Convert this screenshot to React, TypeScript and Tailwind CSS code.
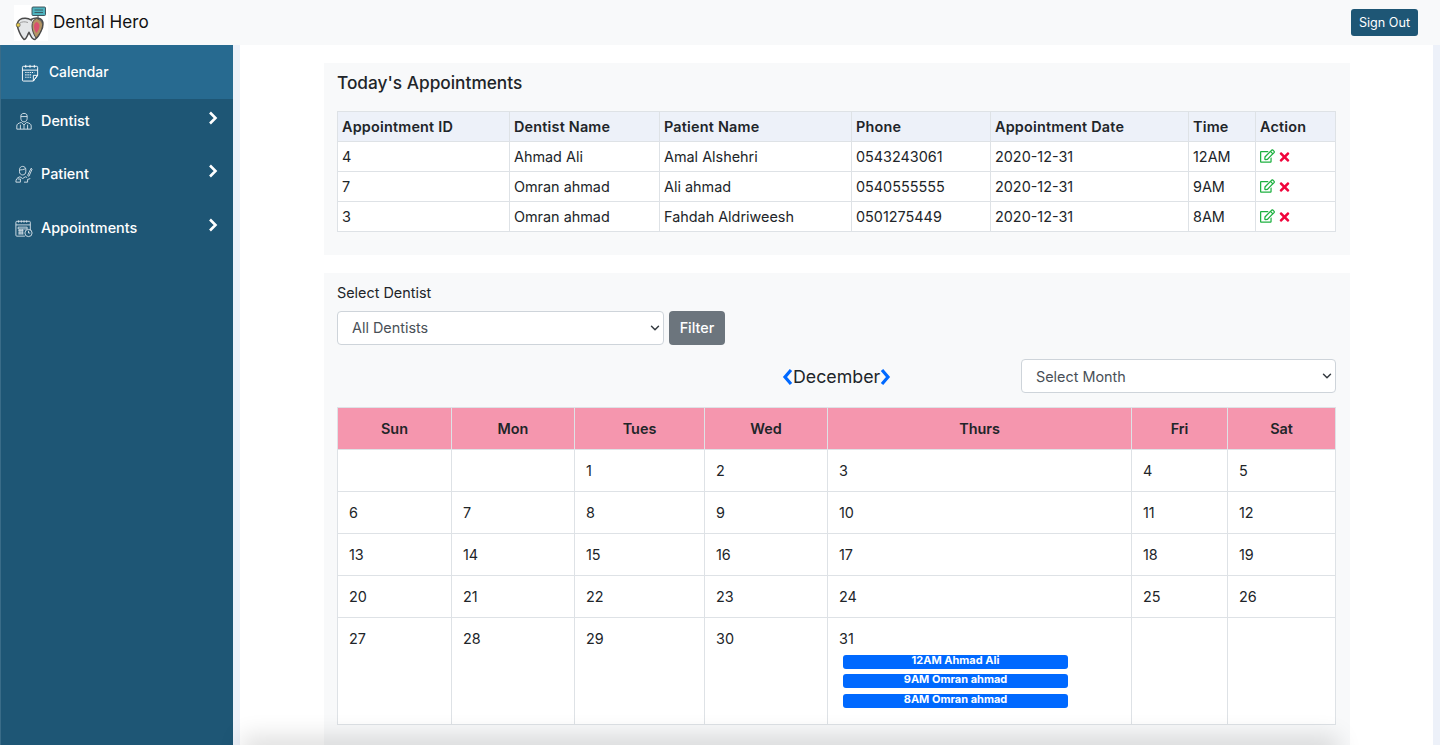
import { ChevronDown } from "lucide-react"
import { FaRegEdit, FaTimes } from "react-icons/fa"

const appointments = [
  { id: "4", dentist: "Ahmad Ali", patient: "Amal Alshehri", phone: "0543243061", date: "2020-12-31", time: "12AM" },
  { id: "7", dentist: "Omran ahmad", patient: "Ali ahmad", phone: "0540555555", date: "2020-12-31", time: "9AM" },
  { id: "3", dentist: "Omran ahmad", patient: "Fahdah Aldriweesh", phone: "0501275449", date: "2020-12-31", time: "8AM" },
]

const days = ["Sun", "Mon", "Tues", "Wed", "Thurs", "Fri", "Sat"]

const weeks = [
  ["", "", "1", "2", "3", "4", "5"],
  ["6", "7", "8", "9", "10", "11", "12"],
  ["13", "14", "15", "16", "17", "18", "19"],
  ["20", "21", "22", "23", "24", "25", "26"],
  ["27", "28", "29", "30", "31", "", ""],
]

const events = ["12AM Ahmad Ali", "9AM Omran ahmad", "8AM Omran ahmad"]

function Logo() {
  return (
    <svg viewBox="0 0 34 36" className="w-[34px] h-[36px]">
      <rect width="34" height="36" fill="#ffffff" />
      <path d="M24 10v4" stroke="#555" strokeWidth="1" />
      <rect x="18" y="2" width="13.500" height="8.500" rx="1" fill="#4fb3bf" stroke="#37474f" strokeWidth="0.9" />
      <path d="M20.500 5h8.500M20.500 7.500h8.500" stroke="#37474f" strokeWidth="0.8" />
      <path d="M17 15c-3-2-8-2.500-11-.5-3 2-3 6-2 9 1 3 3 8 6 11 2.500 0 3-4 5-7 2 3 2.500 7 6 7 3-2 6-8 7.500-12 1-4 .5-7-2-8.500-3-1.500-6.500-1-9.500.5z" fill="#e4e6e8" stroke="#4a4a4a" strokeWidth="1.500" />
      <path d="M22.500 13.500c-3 1-4.500 4-4.500 7.500 0 4 1.500 8 4 12 3-3 6-8 6.500-12 .5-3.500-2-6.500-6-7.500z" fill="#b39463" stroke="#4a4a4a" strokeWidth="1" />
      <path d="M22.500 17c-1.800 1-2.500 2.500-2.500 4.500 0 2.500 1 4.500 2.300 6.500 1.700-2 3.200-4.500 3.200-7 0-2-1.200-3.500-3-4z" fill="#d9506f" />
      <path d="M6 18c2-1.500 5-1.500 8-.5" fill="none" stroke="#9a9a9a" strokeWidth="1" />
      <circle cx="4.200" cy="20" r="2" fill="#e3c84b" stroke="#4a4a4a" strokeWidth="0.6" />
    </svg>
  )
}

function CalendarIcon() {
  return (
    <svg viewBox="0 0 20 20" fill="none" stroke="#ffffff" strokeWidth="1" className="w-[19px] h-[19px]">
      <path d="M17.500 13V4.500a1 1 0 0 0-1-1h-14a1 1 0 0 0-1 1V18a1 1 0 0 0 1 1H13z" />
      <path d="M1.500 7.500h16M5 2v3M9.500 2v3M14 2v3M13 19l4.500-6H13z" />
      <path d="M4.500 10h9.500M4.500 12.500h7M4.500 15h7" strokeDasharray="1.300 1" strokeWidth="1.300" />
    </svg>
  )
}

function DentistIcon() {
  return (
    <svg viewBox="0 0 20 20" fill="none" stroke="#dbe5ec" strokeWidth="1" className="w-[18px] h-[19px]">
      <path d="M6.500 4c0-2 1.500-3 3.500-3s3.500 1 3.500 3v2.500c0 2-1.500 4-3.500 4s-3.500-2-3.500-4z" />
      <path d="M6.500 4.500h7" />
      <path d="M2 18.500v-3.500c0-2 1.500-3 5-4l3 3 3-3c3.500 1 5 2 5 4v3.500z" />
      <path d="M6 18.500v-5M14 18.500v-5M10 14v4.500" />
    </svg>
  )
}

function PatientIcon() {
  return (
    <svg viewBox="0 0 20 20" fill="none" stroke="#dbe5ec" strokeWidth="1" className="w-[19px] h-[19px]">
      <path d="M5 4.500c0-2 1.500-3.500 3.500-3.500 2 0 3.500 1.500 3.500 3.500v2.500c0 2-1.500 3.500-3.500 3.500S5 9 5 7z" />
      <path d="M5 5c2 0 5-.5 7-1.500" />
      <path d="M1 18.500c0-3 1-5 4.500-6l3 2 3-2 2 .8M3 15h3v3.500H1M10 18.500h4v-3l3-1" />
      <path d="M14 11l4-8 1 1-3.500 8z" />
    </svg>
  )
}

function AppointmentsIcon() {
  return (
    <svg viewBox="0 0 20 20" fill="none" stroke="#dbe5ec" strokeWidth="1" className="w-[19px] h-[19px]">
      <path d="M11 18.500H2a1 1 0 0 1-1-1V3a1 1 0 0 1 1-1h14a1 1 0 0 1 1 1v9" />
      <path d="M1 6h16M4 1v2.500M7 1v2.500M10 1v2.500M13 1v2.500" />
      <path d="M3.500 8.500h10v2h-10zM3.500 12h6M3.500 14h6M3.500 16h6M5.500 10.500v6M8 10.500v6" />
      <circle cx="15" cy="15" r="4" />
      <path d="M15 12.500V15h2" />
    </svg>
  )
}

function NavChevron() {
  return (
    <svg viewBox="0 0 10 14" fill="none" stroke="#ffffff" strokeWidth="2.600" className="ml-auto w-[10px] h-[14px] shrink-0">
      <path d="M2 1.500L7.500 7 2 12.500" />
    </svg>
  )
}

function MonthArrow({ d }: { d: string }) {
  return (
    <svg viewBox="0 0 11 18" fill="none" stroke="#0069ff" strokeWidth="3.200" className="w-[11px] h-[18px] shrink-0">
      <path d={d} />
    </svg>
  )
}

function NavItem({ icon, label, className }: { icon: React.ReactNode; label: string; className: string }) {
  return (
    <div className={`flex items-start pt-[12px] pl-[14px] pr-[15px] ${className}`}>
      <span className="w-[18px] h-[20px] flex items-center justify-center shrink-0">{icon}</span>
      <span className="ml-[8px] text-[14.400px] font-medium text-white leading-[20px]">{label}</span>
      <NavChevron />
    </div>
  )
}

function SelectBox({ label, className, selectClassName }: { label: string; className: string; selectClassName?: string }) {
  return (
    <div className={`relative ${className}`}>
      <select className={`appearance-none w-full h-full bg-white border border-[#ced4da] rounded-[4px] pl-[14px] pr-[30px] text-[14.400px] text-[#495057] outline-none ${selectClassName ?? ""}`}>
        <option>{label}</option>
      </select>
      <ChevronDown className="absolute right-[2px] top-[10px] w-[14px] h-[14px] text-[#343a40] pointer-events-none" strokeWidth={2.500} />
    </div>
  )
}

export default function App() {
  return (
    <div className="h-screen overflow-hidden bg-[#edf1f9] text-[#212529] font-['Inter','Liberation_Sans',sans-serif] relative">
      {/* Top bar */}
      <nav className="h-[45px] bg-[#f8f9fa] flex items-center pl-[14px] pr-[22px]">
        <Logo />
        <span className="ml-[5px] text-[17.100px] text-[#111] mb-[1px]">Dental Hero</span>
        <button className="ml-auto h-[27px] w-[67px] pt-[2px] bg-[#1e5675] text-white text-[12.600px] rounded-[3px]">Sign Out</button>
      </nav>

      <div className="flex h-[700px]">
        {/* Sidebar */}
        <aside className="w-[233px] shrink-0 bg-[#1e5675] border-l border-[#3a6c88]">
          <div className="h-[54px] flex items-center pl-[20px] bg-[#276a90]">
            <CalendarIcon />
            <span className="ml-[9px] text-[13.800px] font-medium text-white">Calendar</span>
          </div>
          <NavItem icon={<DentistIcon />} label="Dentist" className="h-[53px]" />
          <NavItem icon={<PatientIcon />} label="Patient" className="h-[54px]" />
          <NavItem icon={<AppointmentsIcon />} label="Appointments" className="h-[54px]" />
        </aside>

        {/* Main */}
        <main className="ml-[7px] w-[1193px] bg-white pl-[84px] pt-[18px]">
          <section className="w-[1026px] h-[192px] bg-[#f8f9fa] px-[13px] pt-[9px]">
            <h2 className="text-[17.280px] font-medium leading-[22px] mb-[17px]">Today's Appointments</h2>
            <table className="table-fixed border-collapse w-[998px] text-[14.400px]">
              <colgroup>
                <col className="w-[172px]" />
                <col className="w-[150px]" />
                <col className="w-[192px]" />
                <col className="w-[139px]" />
                <col className="w-[198px]" />
                <col className="w-[67px]" />
                <col className="w-[80px]" />
              </colgroup>
              <thead>
                <tr className="h-[30px] bg-[#edf1f9]">
                  {["Appointment ID", "Dentist Name", "Patient Name", "Phone", "Appointment Date", "Time", "Action"].map((h) => (
                    <th key={h} className="border border-[#dee2e6] px-[4px] py-0 text-left font-semibold tracking-[0.2px]">{h}</th>
                  ))}
                </tr>
              </thead>
              <tbody>
                {appointments.map((a) => (
                  <tr key={a.id} className="h-[30px] bg-white">
                    <td className="border border-[#dee2e6] px-[4px] py-0">{a.id}</td>
                    <td className="border border-[#dee2e6] px-[4px] py-0">{a.dentist}</td>
                    <td className="border border-[#dee2e6] px-[4px] py-0">{a.patient}</td>
                    <td className="border border-[#dee2e6] px-[4px] py-0">{a.phone}</td>
                    <td className="border border-[#dee2e6] px-[4px] py-0">{a.date}</td>
                    <td className="border border-[#dee2e6] px-[4px] py-0">{a.time}</td>
                    <td className="border border-[#dee2e6] px-[4px] py-0">
                      <span className="flex items-center gap-[3px]">
                        <FaRegEdit className="w-[15px] h-[14px] mb-[1px] text-[#1fb141]" />
                        <FaTimes className="w-[13px] h-[14px] text-[#f0053c]" />
                      </span>
                    </td>
                  </tr>
                ))}
              </tbody>
            </table>
          </section>

          <section className="mt-[18px] w-[1026px] h-[480px] bg-[#f8f9fa] px-[13px] pt-[9px]">
            <div className="text-[14.400px] leading-[22px]">Select Dentist</div>
            <div className="flex mt-[7px] gap-[5px]">
              <SelectBox label="All Dentists" className="w-[327px] h-[34px]" />
              <button className="w-[56px] h-[34px] bg-[#6c757d] text-white text-[14.400px] font-medium rounded-[4px]">Filter</button>
            </div>
            <div className="flex items-start h-[48px] mt-[14px]">
              <div className="ml-[445px] mt-[7px] flex items-center text-[17.800px] h-[22px]">
                <MonthArrow d="M9 2L3 9l6 7" />
                <span>December</span>
                <MonthArrow d="M2 2l6 7-6 7" />
              </div>
              <SelectBox label="Select Month" className="ml-auto mr-[1px] w-[315px] h-[34px]" selectClassName="pt-[2px]" />
            </div>
            <table className="table-fixed border-collapse w-[999px] text-[14.400px]">
              <colgroup>
                <col className="w-[114px]" />
                <col className="w-[123px]" />
                <col className="w-[130px]" />
                <col className="w-[123px]" />
                <col className="w-[304px]" />
                <col className="w-[96px]" />
                <col className="w-[108px]" />
              </colgroup>
              <thead>
                <tr className="h-[42px] bg-[#f596ae]">
                  {days.map((d) => (
                    <th key={d} className="border border-[#dee2e6] p-0 text-center font-semibold">{d}</th>
                  ))}
                </tr>
              </thead>
              <tbody>
                {weeks.map((week, i) => (
                  <tr key={i} className={`${i === 4 ? "h-[107px]" : "h-[42px]"} bg-white`}>
                    {week.map((day, j) => (
                      <td key={j} className="border border-[#dee2e6] pl-[11px] pt-[11px] align-top leading-[20px]">
                        {day}
                        {day === "31" && (
                          <div className="mt-[6px] ml-[4px] w-[225px] flex flex-col gap-[5px]">
                            {events.map((e) => (
                              <div key={e} className="h-[14px] last:mt-[1px] bg-[#0069ff] rounded-[3px] text-white text-[11px] font-bold text-center leading-[11px]">{e}</div>
                            ))}
                          </div>
                        )}
                      </td>
                    ))}
                  </tr>
                ))}
              </tbody>
            </table>
          </section>
        </main>
      </div>

      {/* Footer shadow creeping in at the bottom edge */}
      <div className="absolute left-[250px] right-[110px] -bottom-[10px] h-[10px] shadow-[0_0_24px_8px_rgba(0,0,0,0.14)]" />
    </div>
  )
}
